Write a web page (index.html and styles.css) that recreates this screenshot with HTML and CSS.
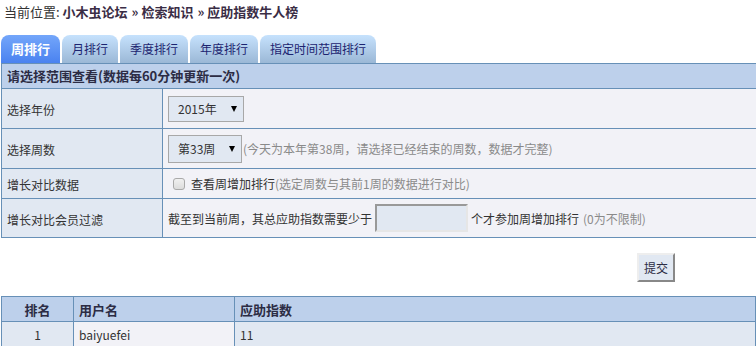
FILE: index.html
```html
<!DOCTYPE html>
<html lang="zh-CN">
<head>
  <meta charset="UTF-8">
  <title>应助指数牛人榜 - 小木虫论坛</title>
  <link rel="stylesheet" href="styles.css">
</head>
<body>
  <div class="crumb">当前位置: <b>小木虫论坛<span class="sep">»</span>检索知识<span class="sep">»</span>应助指数牛人榜</b></div>

  <ul class="tabs">
    <li class="on"><a href="#">周排行</a></li>
    <li><a href="#">月排行</a></li>
    <li><a href="#">季度排行</a></li>
    <li><a href="#">年度排行</a></li>
    <li><a href="#">指定时间范围排行</a></li>
  </ul>

  <form class="query">
    <div class="query-head">请选择范围查看(数据每60分钟更新一次)</div>
    <div class="query-row tall">
      <div class="label">选择年份</div>
      <div class="field">
        <span class="pick year">
          <select name="year"><option>2015年</option></select>
        </span>
      </div>
    </div>
    <div class="query-row tall">
      <div class="label">选择周数</div>
      <div class="field">
        <span class="pick week">
          <select name="week"><option>第33周</option></select>
        </span><span class="note">(今天为本年第38周，请选择已经结束的周数，数据才完整)</span>
      </div>
    </div>
    <div class="query-row short">
      <div class="label">增长对比数据</div>
      <div class="field">
        <label><input type="checkbox" name="grow"> 查看周增加排行</label><span class="note">(选定周数与其前1周的数据进行对比)</span>
      </div>
    </div>
    <div class="query-row mid">
      <div class="label">增长对比会员过滤</div>
      <div class="field">
        截至到当前周，其总应助指数需要少于 <input type="text" name="limit" class="limit"> 个才参加周增加排行 <span class="note gap">(0为不限制)</span>
      </div>
    </div>
  </form>

  <div class="submit-row">
    <button type="button" class="submit">提交</button>
  </div>

  <table class="rank">
    <tr>
      <th class="num">排名</th>
      <th class="user">用户名</th>
      <th>应助指数</th>
    </tr>
    <tr>
      <td class="num">1</td>
      <td class="user">baiyuefei</td>
      <td>11</td>
    </tr>
  </table>
</body>
</html>
```

FILE: styles.css
```css
* {
  box-sizing: border-box;
  margin: 0;
  padding: 0;
}

body {
  font-family: "Noto Sans CJK SC", "Noto Sans", sans-serif;
  font-size: 12px;
  color: #333;
  background: #fff;
}

.crumb {
  padding: 4px 4px 0;
  height: 35px;
  font-size: 13px;
  line-height: 16px;
}

.crumb b {
  color: #3a2d45;
}

.crumb .sep {
  margin: 0 3px 0 4px;
}

.tabs {
  list-style: none;
  display: flex;
  gap: 2px;
  padding-left: 1px;
  height: 28px;
}

.tabs li a {
  display: block;
  height: 28px;
  line-height: 28px;
  padding: 0 10px;
  border-radius: 8px 8px 0 0;
  background: linear-gradient(#c6e2fd, #9bb8d6);
  color: #1c2470;
  text-decoration: none;
}

.tabs li.on a {
  background: linear-gradient(#74a6fa, #4a82f0);
  color: #fff;
  font-weight: bold;
  font-size: 13px;
}

.query {
  margin-left: 1px;
  border-top: 1px solid #6790b7;
  border-left: 1px solid #6790b7;
}

.query-head {
  height: 25px;
  line-height: 24px;
  padding-left: 5px;
  border-bottom: 1px solid #6790b7;
  background: #bdd0eb;
  font-size: 13px;
  font-weight: bold;
  color: #2c2c44;
}

.query-row {
  display: flex;
  border-bottom: 1px solid #6790b7;
}

.query-row.tall { height: 40px; }
.query-row.short { height: 30px; }
.query-row.mid { height: 39px; }

.label {
  width: 161px;
  padding: 2px 0 0 5px;
  border-right: 1px solid #6790b7;
  background: #e1e8f2;
  display: flex;
  align-items: center;
}

.field {
  flex: 1;
  padding-left: 5px;
  background: #f2f2f7;
  display: flex;
  align-items: center;
  white-space: nowrap;
}

.note {
  color: #8a8a8a;
}

.note.gap {
  margin-left: 4px;
}

.pick {
  position: relative;
  display: inline-block;
  margin-right: 1px;
}

.pick select {
  appearance: none;
  display: block;
  height: 26px;
  padding-left: 9px;
  border: 1px solid #a8a8a8;
  border-radius: 0;
  background: #e1e8f2;
  font: 12px "Noto Sans CJK SC", sans-serif;
  color: #333;
}

.pick.year select { width: 76px; }
.pick.week select { width: 74px; height: 28px; }

.pick::after {
  content: "";
  position: absolute;
  right: 7px;
  top: 10px;
  border-left: 3.5px solid transparent;
  border-right: 3.5px solid transparent;
  border-top: 6px solid #000;
  pointer-events: none;
}

.pick.week::after {
  top: 11px;
}

.field label {
  display: flex;
  align-items: center;
}

.field input[type="checkbox"] {
  appearance: none;
  width: 12px;
  height: 12px;
  margin: 0 6px 0 5px;
  border: 1px solid #a9a9a9;
  border-radius: 3px;
  background: linear-gradient(#f0f0f0, #dcdcdc);
}

.limit {
  width: 93px;
  height: 28px;
  margin: 0 3px;
  border: 2px solid #e6e6e6;
  border-top-color: #999;
  border-left-color: #999;
  background: #e1e8f2;
}

.submit-row {
  display: flex;
  justify-content: flex-end;
  padding: 15px 81px 14px 0;
}

.submit {
  width: 38px;
  height: 29px;
  border: 2px solid #888;
  border-top-color: #eee;
  border-left-color: #eee;
  background: #e1e8f2;
  font: 12px "Noto Sans CJK SC", sans-serif;
  color: #2c2c44;
}

.rank {
  width: calc(100% - 1px);
  margin-left: 1px;
  border-collapse: collapse;
}

.rank th,
.rank td {
  height: 25px;
  padding: 0 5px;
  border: 1px solid #6790b7;
  text-align: left;
  white-space: nowrap;
}

.rank th {
  background: #bdd0eb;
  font-size: 13px;
  color: #2c2c44;
}

.rank td {
  background: #e1e8f2;
}

.rank .num {
  width: 72px;
  text-align: center;
}

.rank .user {
  width: 161px;
}

.rank td.user {
  background: #f2f2f7;
}
```
